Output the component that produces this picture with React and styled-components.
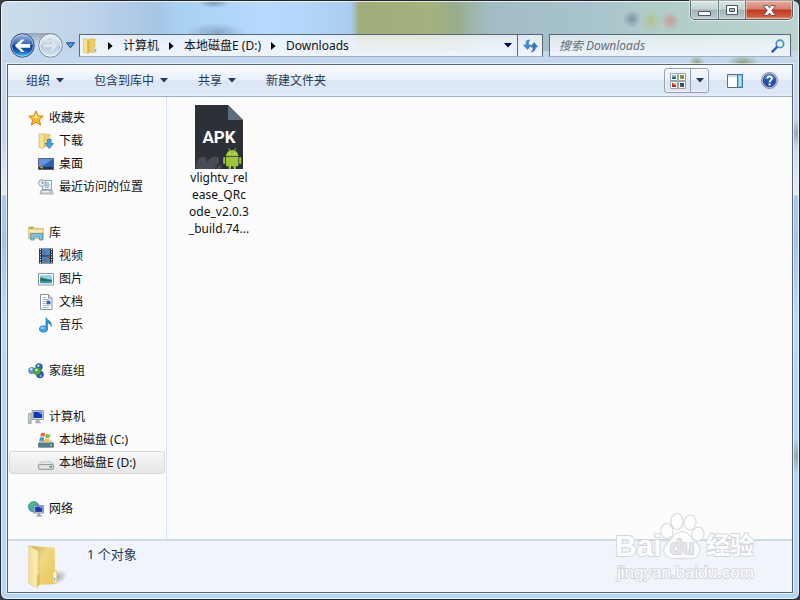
import React from 'react';
import styled, { createGlobalStyle, ThemeProvider } from 'styled-components';

const theme = {
  color_text: '#111',
  color_command: '#1e395b',
  color_pane: '#fcfcfc',
  color_divider: '#d6e5f5',
  color_frame: '#56677d',
  font: '"Noto Sans", "Noto Sans CJK SC", sans-serif',
};

const GlobalStyle = createGlobalStyle`
  *, *::before, *::after {
    box-sizing: border-box;
  }

  body {
    margin: 0;
    background: #3b3d42;
    font-family: ${theme.font};
    font-size: 12px;
    line-height: 17px;
    color: ${theme.color_text};
  }

  button, input {
    font: inherit;
    color: inherit;
    margin: 0;
    padding: 0;
    border: none;
    background: none;
  }

  a {
    color: inherit;
    text-decoration: none;
  }

  svg {
    display: block;
    flex: none;
  }
`;

/* Window frame */

const StyledWindow = styled.div`
  display: flex;
  flex-direction: column;
  position: relative;
  min-height: 100vh;
  padding: 0 6px 6px;
  border: 1px solid #23252b;
  border-radius: 7px;
  box-shadow: inset 0 0 0 1px rgba(255, 255, 255, .75);
  background:
    radial-gradient(circle 9px at 631px 18px, rgba(90, 115, 135, .6), transparent),
    radial-gradient(circle 11px at 650px 20px, rgba(180, 190, 110, .6), transparent),
    radial-gradient(circle 9px at 669px 20px, rgba(215, 120, 110, .6), transparent),
    radial-gradient(ellipse 16px 5px at 213px 2px, rgba(80, 105, 140, .5), transparent),
    radial-gradient(ellipse 30px 9px at 215px 31px, rgba(100, 125, 160, .5), transparent),
    radial-gradient(ellipse 16px 8px at 742px 62px, rgba(125, 145, 90, .8), transparent),
    radial-gradient(ellipse 8px 6px at 696px 61px, rgba(125, 145, 90, .7), transparent),
    radial-gradient(ellipse 8px 14px at 796px 132px, rgba(130, 145, 160, .7), transparent),
    radial-gradient(ellipse 8px 18px at 796px 455px, rgba(130, 150, 125, .7), transparent),
    linear-gradient(90deg, #ccddec 0, #bdd3e9 90px, #a5c5e4 158px, #a9cff1 172px, #b5dafd 265px,
      #b3d7fa 300px, #abccee 350px, #a0ad7b 358px, #a5b27f 430px, #98ad8d 455px, #a2bdc5 490px,
      #a7c3cd 590px, #b1cdc8 660px, #bad3ce 100%) 0 0 / 100% 50px no-repeat,
    linear-gradient(180deg, #c3d8ed 0, #c5d7ee 140px, #e2ecf8 194px, #aac9ec 195px, #a3c3e9 240px,
      #b7d9f9 310px, #b3d6f8 100%);
  background-color: #b5d9fb;
`;

const StyledTitleBar = styled.header`
  display: flex;
  justify-content: flex-end;
  align-items: flex-start;
  height: 32px;
`;

const StyledCaption = styled.div`
  display: flex;
  height: 19px;
  border: 1px solid #55616d;
  border-top: none;
  border-radius: 0 0 5px 5px;
  overflow: hidden;
  box-shadow: 0 0 0 1px rgba(255, 255, 255, .6);
`;

const StyledCaptionButton = styled.button`
  display: flex;
  justify-content: center;
  align-items: center;
  width: ${props => props.$close ? 47 : 27}px;
  border-left: ${props => props.$first ? 'none' : '1px solid #65717c'};
  box-shadow: inset 0 0 0 1px rgba(255, 255, 255, .4);
  background: ${props => props.$close
    ? 'linear-gradient(#e5a99c 0, #d6806f 45%, #bd3a22 50%, #cf5a3c 85%, #e59a76 100%)'
    : 'linear-gradient(#dbe7e7 0, #c5d3d5 45%, #a3b4b8 50%, #bccbcd 100%)'};
`;

/* Address row */

const StyledNavRow = styled.div`
  display: flex;
  align-items: center;
  height: 25px;
  margin: 0 2px 6px 3px;
`;

const StyledTravel = styled.div`
  display: flex;
  align-items: center;
  gap: 3px;
  border-radius: 13px;
  background: linear-gradient(rgba(110, 130, 155, .6), rgba(200, 215, 232, .4) 45%, transparent 75%);
`;

const StyledIconButton = styled.button`
  display: flex;
  justify-content: center;
  align-items: center;
  min-width: ${props => props.$width || 16}px;
`;

const StyledAddress = styled.div`
  display: flex;
  flex: 1;
  align-self: stretch;
  margin: 1px 6px 1px 1px;
  border: 1px solid #5b6976;
  border-bottom-color: #9fb0bf;
  background: linear-gradient(rgba(244, 249, 253, .75), rgba(244, 248, 255, .88) 40%);
`;

const StyledCrumbs = styled.nav`
  display: flex;
  flex: 1;
  align-items: center;
  gap: 10px;
  padding-left: 2px;
`;

const StyledRefresh = styled.button`
  display: flex;
  justify-content: center;
  align-items: center;
  width: 25px;
  border-left: 1px solid #5b6976;
`;

const StyledSearch = styled.label`
  display: flex;
  align-items: center;
  flex: 0 1 242px;
  align-self: stretch;
  margin: 1px 0;
  padding: 0 5px 0 9px;
  border: 1px solid #5b6976;
  border-bottom-color: #9fb0bf;
  background: linear-gradient(rgba(244, 249, 250, .65), rgba(244, 248, 255, .85) 60%);
`;

const StyledSearchInput = styled.input`
  flex: 1;
  min-width: 0;
  outline: none;

  &::placeholder {
    color: #666d74;
    font-style: italic;
    opacity: 1;
  }
`;

/* Client area */

const StyledPanel = styled.div`
  display: flex;
  flex-direction: column;
  flex: 1;
  border: 1px solid ${props => props.theme.color_frame};
  box-shadow: 0 0 0 1px rgba(255, 255, 255, .6);
  background: ${props => props.theme.color_pane};
`;

const StyledToolbar = styled.div`
  display: flex;
  align-items: center;
  gap: 30px;
  height: 32px;
  padding: 0 14px 0 18px;
  border-bottom: 1px solid #a0afc3;
  color: ${props => props.theme.color_command};
  background: linear-gradient(#fbfdff 0, #e8f0fa 48%, #dce6f4 50%, #dde7f5 90%, #e9eff8 100%);
`;

const StyledCommand = styled.button`
  display: flex;
  align-items: center;
  gap: 6px;
  white-space: nowrap;
`;

const StyledTools = styled.div`
  display: flex;
  align-items: center;
  gap: 18px;
  margin-left: auto;
`;

const StyledViewSwitch = styled.div`
  display: flex;
  height: 25px;
  border: 1px solid #93a0b3;
  border-radius: 3px;
  box-shadow: inset 0 0 0 1px rgba(255, 255, 255, .6);

  & > * + * {
    border-left: 1px solid #93a0b3;
  }
`;

const StyledBody = styled.div`
  display: flex;
  flex: 1;
`;

const StyledSidebar = styled.nav`
  flex: 0 0 159px;
  padding: 9px 1px;
  border-right: 1px solid ${props => props.theme.color_divider};
`;

const StyledGroup = styled.div`
  & + & {
    margin-top: 23px;
  }
`;

const StyledTreeItem = styled.a`
  display: flex;
  align-items: center;
  gap: 5px;
  height: 23px;
  padding-left: ${props => props.$child ? 28 : 18}px;
  border: 1px solid ${props => props.$selected ? '#d9d9d9' : 'transparent'};
  border-radius: 3px;
  background: ${props => props.$selected ? 'linear-gradient(#f8f8f8, #e6e6e6)' : 'none'};
  white-space: nowrap;
`;

const StyledFiles = styled.main`
  flex: 1;
  padding: 8px 14px;
`;

const StyledFile = styled.a`
  display: flex;
  flex-direction: column;
  align-items: center;
  width: 76px;
`;

const StyledFileLine = styled.span`
  display: block;
`;

const StyledDetails = styled.footer`
  display: flex;
  gap: 19px;
  height: 53px;
  padding: 3px 20px;
  border-top: 2px solid #cddbe9;
  font-size: 13px;
  line-height: 20px;
  color: ${props => props.theme.color_command};
  background: #f1f5fb;
`;

const StyledWatermark = styled.svg`
  position: absolute;
  right: 40px;
  bottom: 14px;
  pointer-events: none;
`;

/* Icons */

const Icon = ({ children, size = 16 }) => (
  <svg width={size} height={size} viewBox="0 0 16 16" aria-hidden="true">{children}</svg>
);

const DownArrow = ({ color = '#1e395b' }) => (
  <svg width="8" height="5" viewBox="0 0 8 5" aria-hidden="true">
    <path d="M0 0h8L4 4.6z" fill={color} />
  </svg>
);

const CrumbArrow = () => (
  <svg width="5" height="8" viewBox="0 0 5 8" aria-hidden="true">
    <path d="M0 0l4.6 4L0 8z" fill="#000" />
  </svg>
);

const BackIcon = () => (
  <svg width="25" height="25" viewBox="0 0 25 25" aria-hidden="true">
    <defs>
      <linearGradient id="back" x1="0" y1="0" x2="0" y2="1">
        <stop offset="0" stopColor="#9db9e4" />
        <stop offset=".48" stopColor="#2f5eb4" />
        <stop offset=".5" stopColor="#0a3590" />
        <stop offset=".75" stopColor="#125dbb" />
        <stop offset="1" stopColor="#4fd3fb" />
      </linearGradient>
    </defs>
    <circle cx="12.5" cy="12.5" r="11.7" fill="url(#back)" stroke="#32466b" />
    <circle cx="12.5" cy="12.5" r="10.8" fill="none" stroke="#dcecff" strokeOpacity=".6" />
    <path d="M4.8 12.8l6.6-6.3h3.2l-4 4.4h9.6v3.8h-9.6l4 4.4h-3.2z" fill="#fff" />
  </svg>
);

const ForwardIcon = () => (
  <svg width="25" height="25" viewBox="0 0 25 25" aria-hidden="true">
    <defs>
      <linearGradient id="fwd" x1="0" y1="0" x2="0" y2="1">
        <stop offset="0" stopColor="#eaf1f8" />
        <stop offset=".5" stopColor="#c7d5e3" />
        <stop offset=".52" stopColor="#b5c8da" />
        <stop offset="1" stopColor="#dae9f6" />
      </linearGradient>
    </defs>
    <circle cx="12.5" cy="12.5" r="11.7" fill="url(#fwd)" stroke="#73859a" />
    <circle cx="12.5" cy="12.5" r="10.7" fill="none" stroke="#fff" strokeOpacity=".7" />
    <path d="M20.2 12.8l-6.6-6.3h-3.2l4 4.4H5v3.8h9.4l-4 4.4h3.2z" fill="#dce6ef" stroke="#b3c3d2" strokeWidth=".6" />
  </svg>
);

const HistoryArrow = () => (
  <svg width="9" height="7" viewBox="0 0 9 7" aria-hidden="true">
    <path d="M.5.8h8L4.5 5.8z" fill="#4aa3de" stroke="#173f77" />
  </svg>
);

const FolderIcon = () => (
  <Icon>
    <path d="M6 1.3l7-.5v13.4H7z" fill="#ecce68" stroke="#c9a546" strokeWidth=".5" />
    <path d="M1.5.8h4.3l1.200 1.200v12.500l-1 1-4.500-1.200z" fill="#f7e08e" stroke="#d3b257" strokeWidth=".5" />
    <path d="M5 2l2 .6v11.800l-1.500.9z" fill="#dcb348" />
    <path d="M12.500 9h2v5h-2z" fill="#fff" stroke="#b9c7cf" strokeWidth=".4" />
    <path d="M13 11h1v2.500h-1z" fill="#50aede" />
  </Icon>
);

const BigFolderIcon = () => (
  <svg width="40" height="46" viewBox="0 0 40 46" aria-hidden="true">
    <defs>
      <linearGradient id="bfBack" x1="0" y1="0" x2="1" y2="1">
        <stop offset="0" stopColor="#c9a94c" />
        <stop offset=".4" stopColor="#efd784" />
        <stop offset="1" stopColor="#e9c958" />
      </linearGradient>
      <linearGradient id="bfFront" x1="0" y1="0" x2="1" y2="0">
        <stop offset="0" stopColor="#f3dd8e" />
        <stop offset=".7" stopColor="#faeeb9" />
        <stop offset="1" stopColor="#e8cf79" />
      </linearGradient>
      <radialGradient id="bfShade">
        <stop offset="0" stopColor="#000" stopOpacity=".4" />
        <stop offset="1" stopColor="#000" stopOpacity="0" />
      </radialGradient>
    </defs>
    <ellipse cx="26" cy="34" rx="14" ry="7" fill="url(#bfShade)" transform="rotate(-18 26 34)" />
    <path d="M2 2l24 1.5.8 1.2v35L10 41z" fill="url(#bfBack)" />
    <path d="M.8 1.5c3 1.5 8 4.5 9.6 6 .6.7.8 1.2.8 2v20l-1.8 2.4v11.600L1.6 40C.8 39.5.6 39 .6 38z" fill="url(#bfFront)" stroke="#dfc368" strokeWidth=".5" />
    <path d="M10.4 29.4l1.6 1.2v9.8l-3.2 3.200V32z" fill="#e5c257" />
    <path d="M25 28l1.6-1.6h1.6l.8 1.8v10L25 40z" fill="#f8e6a1" stroke="#d9b956" strokeWidth=".6" />
    <path d="M25.7 29h1.7v8h-1.7z" fill="#fff" />
    <path d="M25.9 34h1.3v2.7h-1.3z" fill="#59b8e8" />
  </svg>
);

const RefreshIcon = () => (
  <Icon>
    <path d="M5.2 2.2C3.4 4 4.2 6 4.3 7H1.5l4 4.5L9 7H6.8C6.6 5.5 6 4 7.6 2z" fill="#3f8fd6" stroke="#2268ad" strokeWidth=".5" />
    <path d="M9.2 14c2-1.4 2-3.6 1.8-5H8.6l3.6-4.5L15.6 9h-2.2c.2 2.4-1 4.4-4.2 5z" fill="#2f78c6" stroke="#1f529c" strokeWidth=".5" />
  </Icon>
);

const SearchIcon = () => (
  <Icon size={14}>
    <path d="M6.7 9.3L1.6 14.4" stroke="#245ca8" strokeWidth="2.6" strokeLinecap="round" />
    <circle cx="10.2" cy="5.6" r="4.2" fill="#e8f5ff" stroke="#3b8fd3" strokeWidth="2" />
  </Icon>
);

const ViewIcon = () => (
  <Icon>
    <path d="M.5.5h7v7h-7zM8.5.5h7v7h-7zM.5 8.5h7v7h-7zM8.5 8.5h7v7h-7z" fill="#fff" stroke="#98a2ae" />
    <path d="M2 2h4v2H2z" fill="#6fb7dc" />
    <path d="M2 4h4v2H2z" fill="#21784f" />
    <path d="M10 2h4v4h-4z" fill="#5cb531" />
    <path d="M11.5 3.5h2v1.5h-2z" fill="#d8423a" />
    <path d="M2 10h4v4H2z" fill="#b52c16" />
    <path d="M3 10h3v2H3z" fill="#e8a028" />
    <path d="M10 10h4v4h-4z" fill="#274a8c" />
    <path d="M10 12h2v2h-2z" fill="#a4452e" />
  </Icon>
);

const PreviewIcon = () => (
  <Icon>
    <path d="M.5 1.5h15v13H.5z" fill="#fff" stroke="#5a6f86" />
    <path d="M1 2h9v2H1z" fill="#cfdbe8" />
    <path d="M10.5 1.5h5v13h-5z" fill="#7cc8e2" stroke="#3f7896" />
    <path d="M12 3h2v10h-2z" fill="#b0e3f2" />
  </Icon>
);

const HelpIcon = () => (
  <Icon size={17}>
    <circle cx="8" cy="8" r="7.5" fill="#d6dae2" stroke="#6b7280" strokeWidth=".8" />
    <circle cx="8" cy="8" r="6" fill="#2450b8" stroke="#122d7c" strokeWidth=".6" />
    <path d="M3 7a5 5 0 0110 0c-3-1.5-7-1.5-10 0z" fill="#6d94e0" opacity=".6" />
    <path d="M5.9 6.4c0-3 4.4-2.8 4.3-.2 0 1.6-2.1 1.6-2.1 3.4" fill="none" stroke="#fff" strokeWidth="1.7" />
    <circle cx="8.1" cy="11.7" r="1.1" fill="#fff" />
  </Icon>
);

const StarIcon = () => (
  <Icon>
    <path d="M8 .8l2.1 4.9 5.3.5-4 3.6 1.2 5.3L8 12.3l-4.6 2.8 1.2-5.3-4-3.6 5.3-.5z" fill="#fdb827" stroke="#e0721b" strokeWidth=".9" />
    <path d="M8 3l1.2 3.6 3 .3L8 8.5 4 6.9l2.8-.3z" fill="#fff0a0" />
  </Icon>
);

const DownloadsIcon = () => (
  <Icon>
    <path d="M5 1l7 .3v12L6 14z" fill="#ecd37c" stroke="#c9a546" strokeWidth=".5" />
    <path d="M1 .8h4l1.2 1.4v12L5 15.3l-4-1z" fill="#f7e29a" stroke="#cfa947" strokeWidth=".6" />
    <path d="M9.5 6.5h3.6v4h2.3L11.3 15.6 7.2 10.5h2.3z" fill="#3ea2e6" stroke="#186cb6" strokeWidth=".7" />
  </Icon>
);

const DesktopIcon = () => (
  <Icon>
    <path d="M.5 2.5h15v11H.5z" fill="#2e62bd" stroke="#56657c" />
    <path d="M1 3h14L6 9 1 11z" fill="#5f94dd" />
    <path d="M1 11h14v2H1z" fill="#27303d" />
    <path d="M2 10h2v2H2z" fill="#e66b35" />
    <path d="M3.5 11h1.5v1.5H3.5z" fill="#6ecb4d" />
  </Icon>
);

const RecentIcon = () => (
  <Icon>
    <path d="M4.5 1.5h9v9h-9z" fill="#f5f8fb" stroke="#96a1ad" />
    <path d="M7 4h4M7 6h5M7 8h4" stroke="#5a9fd8" />
    <path d="M3 11.2h11l1.3 3.8H2z" fill="#c6cdd4" stroke="#8d98a3" strokeWidth=".7" />
    <path d="M5 12.8h6" stroke="#fff" />
    <circle cx="4" cy="4" r="3.4" fill="#eef3f7" stroke="#8a949e" strokeWidth=".9" />
    <path d="M4 2v2.2h1.6" fill="none" stroke="#5c6670" strokeWidth=".8" />
  </Icon>
);

const LibraryIcon = () => (
  <Icon>
    <path d="M.7 2h5l1 1.4h8.6v10.2H.7z" fill="#f0d67c" stroke="#caa448" strokeWidth=".7" />
    <path d="M1.5 3h3.6" stroke="#65b539" strokeWidth="1.2" />
    <path d="M1 5.2h14v2H1z" fill="#fbefb9" />
    <path d="M2.8 15V8.6h11.8V15h-3v-3.2H6V15z" fill="#7ec5ec" stroke="#3e8cc2" strokeWidth=".8" />
  </Icon>
);

const VideoIcon = () => (
  <Icon>
    <path d="M1 .5h14v15H1z" fill="#20262f" />
    <path d="M4 1h8v6.5H4zM4 8.5h8V15H4z" fill="#3f8bd6" />
    <path d="M5 1.5l3 3-2 2.5zM9 9l3-2v6zM5 12l3-2 1 4z" fill="#9a5444" />
    <path d="M2.4 1v14M13.6 1v14" stroke="#e9edf1" strokeWidth="1.2" strokeDasharray="1.3 1.2" />
  </Icon>
);

const PictureIcon = () => (
  <Icon>
    <path d="M.5 2.5h15v11.5H.5z" fill="#fff" stroke="#8f979f" />
    <path d="M2.2 4.2h11.6v8H2.2z" fill="#8ad0ec" />
    <path d="M2.2 6.5c3 0 5 2 11.6 2v2H2.2z" fill="#28714d" />
    <path d="M2.2 10h11.6v2.2H2.2z" fill="#3296bd" />
  </Icon>
);

const DocumentIcon = () => (
  <Icon>
    <path d="M2.5.5h8l3.5 3.5v11.5H2.5z" fill="#fff" stroke="#89929d" />
    <path d="M10.5.5V4H14" fill="#dbe2ea" stroke="#89929d" />
    <path d="M4.5 3.5h4M4.5 5.5h7M4.5 7.5h3M4.5 9.5h3M4.5 11.5h7M4.5 13.5h6" stroke="#a9b7c8" />
    <path d="M8.5 6.7h4v3.6h-4z" fill="#3167b5" />
  </Icon>
);

const MusicIcon = () => (
  <Icon>
    <path d="M8 .5c.5 2.6 6.6 3 5.2 9-.4-2.4-1.6-3.2-3.6-3.6v6.5H7.8z" fill="#2f91dc" stroke="#1a66ab" strokeWidth=".5" />
    <ellipse cx="5.5" cy="12" rx="4.1" ry="3.2" fill="#3ba5e8" stroke="#1c6fb4" strokeWidth=".6" />
    <ellipse cx="4.6" cy="11" rx="1.8" ry="1" fill="#a5ddf8" />
  </Icon>
);

const HomeGroupIcon = () => (
  <Icon>
    <circle cx="3.800" cy="7.5" r="3.6" fill="#5a92d8" />
    <circle cx="11" cy="4" r="3.700" fill="#2f62b8" />
    <circle cx="12" cy="11.5" r="3.800" fill="#2e56a6" />
    <circle cx="9.2" cy="8.2" r="3.6" fill="#4aad40" stroke="#2c7b31" strokeWidth=".6" />
    <circle cx="3.2" cy="6.3" r="1.2" fill="#d7e9fb" />
    <circle cx="10.3" cy="2.8" r="1.2" fill="#c5dcf8" />
    <circle cx="8.4" cy="7" r="1.3" fill="#d2f2b9" />
    <circle cx="12.7" cy="13" r="1.2" fill="#7ea8e5" />
  </Icon>
);

const ComputerIcon = () => (
  <Icon>
    <path d="M.5 4.5h2.6v10H.5z" fill="#cbd2d8" stroke="#868f98" strokeWidth=".7" />
    <path d="M1.8 12v1.6" stroke="#5bc041" />
    <path d="M4 1.5h11.5v9H4z" fill="#d9dee3" stroke="#808a95" strokeWidth=".8" />
    <path d="M5.4 2.8h8.8v6.2H5.4z" fill="#1537b2" />
    <path d="M9 2.8h5.2v3z" fill="#6d94ef" />
    <path d="M8.4 11h3l.4 2H13v1.3H7V13h1z" fill="#a5aeb7" />
  </Icon>
);

const SystemDriveIcon = () => (
  <Icon>
    <path d="M2.6 9h10.8l2 2.4H.6z" fill="#c3d3dc" stroke="#7d8d98" strokeWidth=".6" />
    <path d="M.6 11.2h14.8v4H.6z" fill="#528295" stroke="#42606e" strokeWidth=".7" />
    <path d="M12 12.3h2v1.8h-2z" fill="#6be04c" />
    <path d="M3 1.2C4.6.4 6 .6 7.2 1.4L6.4 5c-1.2-.8-2.6-.9-4.2-.2z" fill="#ea6a34" />
    <path d="M8 1.8c1.4.8 3 .8 4.5.1l-.8 3.5c-1.6.8-3 .7-4.5 0z" fill="#7cc344" />
    <path d="M2 5.6c1.6-.7 3-.6 4.2.2l-.9 3.6c-1.2-.8-2.6-.9-4.2-.2z" fill="#4391d8" />
    <path d="M7 6.2c1.4.8 2.9.8 4.5 0l-.9 3.6c-1.6.7-3.1.7-4.5 0z" fill="#f5bf36" />
  </Icon>
);

const DriveIcon = () => (
  <Icon>
    <path d="M2.8 7h10.4l2.2 3.6H.6z" fill="#f1f3f4" stroke="#9aa0a5" strokeWidth=".6" />
    <path d="M.6 10.2q0-.8 1-.8h12.8q1 0 1 .8v3.2q0 .9-1 .9H1.6q-1 0-1-.9z" fill="#dfe2e4" stroke="#767c82" strokeWidth=".8" />
    <path d="M11.5 10.8h2.3v2h-2.3z" fill="#3fae35" />
  </Icon>
);

const NetworkIcon = () => (
  <Icon>
    <circle cx="5.8" cy="5.8" r="5.3" fill="#38a6dd" stroke="#1b6aa6" strokeWidth=".6" />
    <path d="M2 3.5c2-2.5 4-2.6 5-2.2L5 5.2 2.6 6.4zM3 8l3 .6-.5 2.2z" fill="#5fc544" />
    <path d="M6 4.5h9.5v7.6H6z" fill="#cdd4dc" stroke="#6f7a86" strokeWidth=".7" />
    <path d="M7.2 5.6h7.2v5.3H7.2z" fill="#1738b0" />
    <path d="M10.5 5.6h3.9v2.7z" fill="#668bea" />
    <path d="M10 12.2h1.8v2H14v1.3H8v-1.3h2z" fill="#929ca6" />
  </Icon>
);

const ApkIcon = () => (
  <svg width="48" height="64" viewBox="0 0 48 64" aria-hidden="true">
    <path d="M0 0h33l15 15v49H0z" fill="#2c3138" />
    <path d="M33 0l15 15H33z" fill="#5d6b7c" />
    <path d="M1 64c-1-5 2-12 7-12 4 0 5 3 3 7 3-6 7-9 11-7 4 2 2 6-1 9l-2 3z" fill="#484c54" />
    <path d="M21 64c1-3 4-5 6-3l-1 3z" fill="#484c54" />
    <text x="24" y="38" textAnchor="middle" fill="#fff" fontFamily='"Roboto", sans-serif' fontWeight="700" fontSize="17">APK</text>
    <g fill="#a0c43a">
      <path d="M31 51.2a6.2 6.2 0 0112.4 0z" />
      <path d="M31 52h12.4v8q0 1.3-1.3 1.3h-9.8q-1.3 0-1.3-1.3z" />
      <path d="M33.5 43.2l1.7 2.8M41 43.2L39.2 46" stroke="#a0c43a" strokeWidth=".9" />
      <rect x="28.2" y="52" width="2" height="7" rx="1" />
      <rect x="44.2" y="52" width="2" height="7" rx="1" />
      <rect x="33.6" y="60" width="2.4" height="4" rx="1" />
      <rect x="38.4" y="60" width="2.4" height="4" rx="1" />
    </g>
    <circle cx="34.7" cy="48.6" r=".7" fill="#fff" />
    <circle cx="39.7" cy="48.6" r=".7" fill="#fff" />
  </svg>
);

const MinimizeIcon = () => (
  <svg width="13" height="13" viewBox="0 0 13 13" aria-hidden="true">
    <path d="M.5 7.5h12v4H.5z" fill="#fff" stroke="#4e565f" />
  </svg>
);

const MaximizeIcon = () => (
  <svg width="12" height="10" viewBox="0 0 12 10" aria-hidden="true">
    <path fillRule="evenodd" d="M.5.5h11v9H.5zM3.5 3.5v3h5v-3z" fill="#fff" stroke="#4e565f" />
  </svg>
);

const CloseIcon = () => (
  <svg width="13" height="11" viewBox="0 0 13 11" aria-hidden="true">
    <path d="M1 .6h3.6l1.9 2.2L8.4.6H12v1L8.8 5.500 12 9.4v1H8.4L6.5 8.2l-1.9 2.2H1v-1l3.2-3.900L1 1.6z" fill="#fff" stroke="#5c4248" strokeWidth=".9" />
  </svg>
);

const Watermark = () => (
  <StyledWatermark width="148" height="72" viewBox="0 0 148 72">
    <g fill="#fdfdfe" stroke="#d3d7dc" strokeWidth="2" strokeLinejoin="round" paintOrder="stroke">
      <ellipse cx="56" cy="18" rx="5.5" ry="7" transform="rotate(-12 56 18)" />
      <ellipse cx="66" cy="8.5" rx="5.5" ry="7.5" />
      <ellipse cx="79" cy="9.5" rx="5.5" ry="7" transform="rotate(12 79 9.5)" />
      <ellipse cx="87" cy="21" rx="5.5" ry="6.5" transform="rotate(15 87 21)" />
      <path d="M71 19c6 0 8 5 12 9s7 7 5 12-8 6-17 5c-9 1-15 0-17-5s1-8 5-12 6-9 12-9z" />
      <g fontFamily='"Liberation Sans", sans-serif' fontWeight="700">
        <text x="4" y="43" fontSize="30">Bai</text>
        <text x="71" y="41" fontSize="20" textAnchor="middle" fill="#e4e7ec">du</text>
        <text x="95" y="41" fontSize="24" fontFamily='"Noto Sans CJK SC", sans-serif'>经验</text>
      </g>
      <text x="6" y="65" fontSize="17" fontFamily='"Liberation Sans", sans-serif'>jingyan.baidu.com</text>
    </g>
  </StyledWatermark>
);

/* Data */

const crumbs = ['计算机', '本地磁盘E (D:)', 'Downloads'];

const commands = [
  { label: '组织', menu: true },
  { label: '包含到库中', menu: true },
  { label: '共享', menu: true },
  { label: '新建文件夹' },
];

const groups = [
  {
    label: '收藏夹',
    icon: StarIcon,
    items: [
      { label: '下载', icon: DownloadsIcon },
      { label: '桌面', icon: DesktopIcon },
      { label: '最近访问的位置', icon: RecentIcon },
    ],
  },
  {
    label: '库',
    icon: LibraryIcon,
    items: [
      { label: '视频', icon: VideoIcon },
      { label: '图片', icon: PictureIcon },
      { label: '文档', icon: DocumentIcon },
      { label: '音乐', icon: MusicIcon },
    ],
  },
  { label: '家庭组', icon: HomeGroupIcon, items: [] },
  {
    label: '计算机',
    icon: ComputerIcon,
    items: [
      { label: '本地磁盘 (C:)', icon: SystemDriveIcon },
      { label: '本地磁盘E (D:)', icon: DriveIcon, selected: true },
    ],
  },
  { label: '网络', icon: NetworkIcon, items: [] },
];

const fileName = ['vlightv_rel', 'ease_QRc', 'ode_v2.0.3', '_build.74...'];

/* Sections */

const TreeItem = ({ item, child }) => {
  const ItemIcon = item.icon;
  return (
    <StyledTreeItem href="#" $child={child} $selected={item.selected}>
      <ItemIcon />
      <span>{item.label}</span>
    </StyledTreeItem>
  );
};

const Sidebar = () => (
  <StyledSidebar>
    {groups.map(group => (
      <StyledGroup key={group.label}>
        <TreeItem item={group} />
        {group.items.map(item => (
          <TreeItem key={item.label} item={item} child />
        ))}
      </StyledGroup>
    ))}
  </StyledSidebar>
);

const NavRow = () => (
  <StyledNavRow>
    <StyledTravel>
      <StyledIconButton aria-label="后退"><BackIcon /></StyledIconButton>
      <StyledIconButton aria-label="前进"><ForwardIcon /></StyledIconButton>
    </StyledTravel>
    <StyledIconButton $width={15} aria-label="最近的页面"><HistoryArrow /></StyledIconButton>

    <StyledAddress>
      <StyledCrumbs>
        <FolderIcon />
        {crumbs.map(crumb => (
          <React.Fragment key={crumb}>
            <CrumbArrow />
            <a href="#">{crumb}</a>
          </React.Fragment>
        ))}
      </StyledCrumbs>
      <StyledIconButton $width={18} aria-label="以前的位置"><DownArrow color="#000060" /></StyledIconButton>
      <StyledRefresh aria-label="刷新"><RefreshIcon /></StyledRefresh>
    </StyledAddress>

    <StyledSearch>
      <StyledSearchInput type="text" placeholder="搜索 Downloads" aria-label="搜索" />
      <SearchIcon />
    </StyledSearch>
  </StyledNavRow>
);

const Toolbar = () => (
  <StyledToolbar>
    {commands.map(command => (
      <StyledCommand key={command.label}>
        {command.label}
        {command.menu && <DownArrow />}
      </StyledCommand>
    ))}
    <StyledTools>
      <StyledViewSwitch>
        <StyledIconButton $width={25} aria-label="更改视图"><ViewIcon /></StyledIconButton>
        <StyledIconButton $width={18} aria-label="更多选项"><DownArrow /></StyledIconButton>
      </StyledViewSwitch>
      <StyledIconButton aria-label="预览窗格"><PreviewIcon /></StyledIconButton>
      <StyledIconButton aria-label="帮助"><HelpIcon /></StyledIconButton>
    </StyledTools>
  </StyledToolbar>
);

const App = () => (
  <ThemeProvider theme={theme}>
    <GlobalStyle />
    <StyledWindow>
      <StyledTitleBar>
        <StyledCaption>
          <StyledCaptionButton $first aria-label="最小化"><MinimizeIcon /></StyledCaptionButton>
          <StyledCaptionButton aria-label="最大化"><MaximizeIcon /></StyledCaptionButton>
          <StyledCaptionButton $close aria-label="关闭"><CloseIcon /></StyledCaptionButton>
        </StyledCaption>
      </StyledTitleBar>

      <NavRow />

      <StyledPanel>
        <Toolbar />
        <StyledBody>
          <Sidebar />
          <StyledFiles>
            <StyledFile href="#">
              <ApkIcon />
              {fileName.map(line => (
                <StyledFileLine key={line}>{line}</StyledFileLine>
              ))}
            </StyledFile>
          </StyledFiles>
        </StyledBody>
        <StyledDetails>
          <BigFolderIcon />
          <span>1 个对象</span>
        </StyledDetails>
      </StyledPanel>

      <Watermark />
    </StyledWindow>
  </ThemeProvider>
);

export default App;
